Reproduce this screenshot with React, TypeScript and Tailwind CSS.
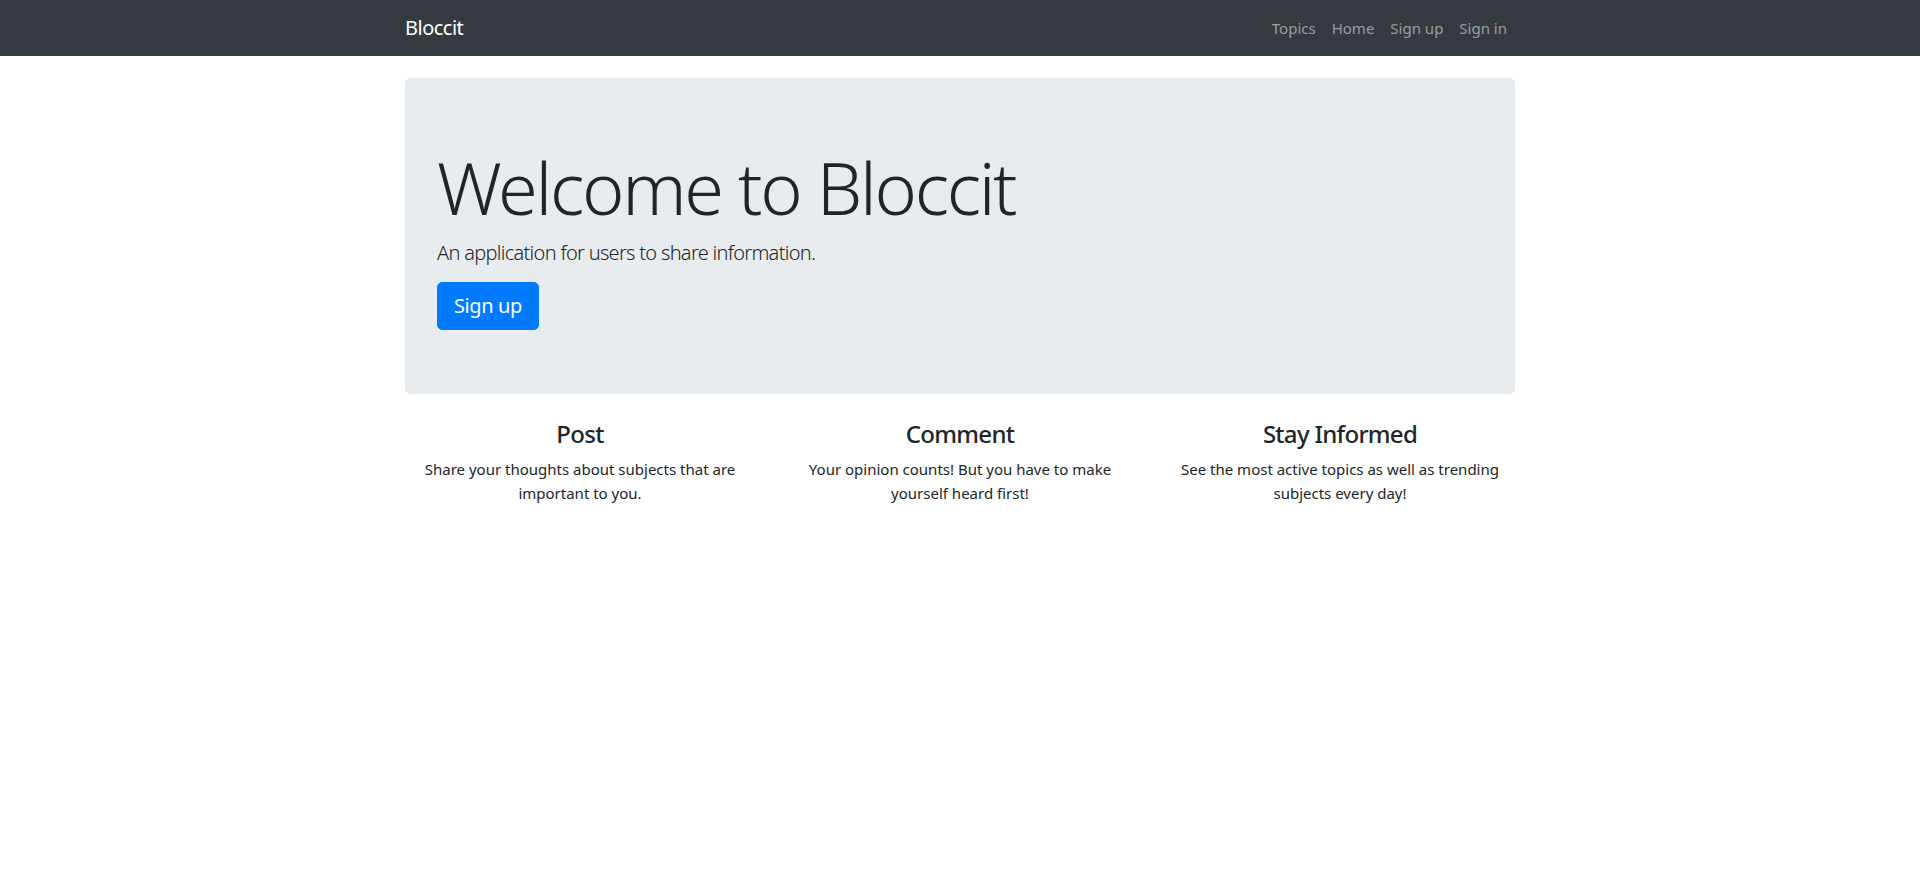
import React from 'react';

const navLinks = ['Topics', 'Home', 'Sign up', 'Sign in'];

const features = [
  {
    title: 'Post',
    text: 'Share your thoughts about subjects that are important to you.',
  },
  {
    title: 'Comment',
    text: 'Your opinion counts! But you have to make yourself heard first!',
  },
  {
    title: 'Stay Informed',
    text: 'See the most active topics as well as trending subjects every day!',
  },
];

const App: React.FC = () => {
  return (
    <div className="min-h-[889px] bg-white text-[#212529] font-['Noto_Sans',sans-serif] text-base leading-normal">
      {/* navbar */}
      <nav className="bg-[#343a40] h-14">
        <div className="w-[1140px] mx-auto px-[15px] h-full flex items-center justify-between">
          <a className="text-white text-xl leading-[30px] py-[5px] tracking-[-0.5px]">Bloccit</a>
          <ul className="flex">
            {navLinks.map(link => (
              <li key={link}>
                <a className="block px-2 py-2 text-[15px] leading-6 text-white/50">{link}</a>
              </li>
            ))}
          </ul>
        </div>
      </nav>

      <div className="w-[1140px] mx-auto px-[15px] mt-[22px]">
        {/* jumbotron */}
        <div className="bg-[#e9ecef] rounded-[5px] px-8 py-16 mb-[26px]">
          <h1 className="text-[72px] font-light leading-[1.2] pt-[2px] mb-2 tracking-[-2.3px]">
            Welcome to Bloccit
          </h1>
          <p className="text-xl font-light leading-[30px] mb-[14px] tracking-[-0.7px]">
            An application for users to share information.
          </p>
          <button className="bg-[#007bff] border border-[#007bff] text-white text-xl leading-[30px] px-4 py-2 rounded-[5px] tracking-[-0.4px]">
            Sign up
          </button>
        </div>

        {/* features */}
        <div className="grid grid-cols-3 -mx-[15px]">
          {features.map(f => (
            <div key={f.title} className="px-[15px] text-center">
              <h4 className="text-2xl font-medium leading-[1.2] mb-2 tracking-[-0.7px]">{f.title}</h4>
              <p className="text-[15px] leading-6">{f.text}</p>
            </div>
          ))}
        </div>
      </div>
    </div>
  );
};

export default App;
